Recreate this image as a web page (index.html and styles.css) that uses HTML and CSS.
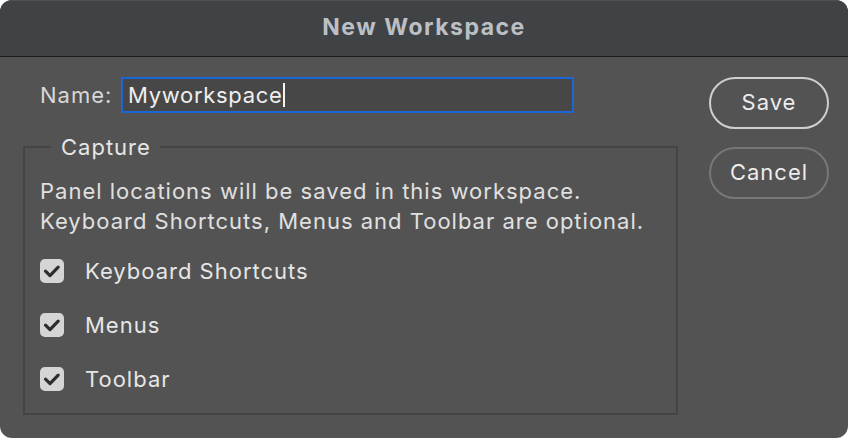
FILE: index.html
```html
<!DOCTYPE html>
<html lang="en">
<head>
<meta charset="utf-8">
<title>New Workspace</title>
<link rel="stylesheet" href="styles.css">
</head>
<body>
<div class="window">
  <header class="titlebar">New Workspace</header>
  <main class="content">
    <div class="main-col">
      <div class="name-row">
        <label class="name-label">Name:</label>
        <div class="name-field"><span class="name-value">Myworkspace</span><span class="caret"></span></div>
      </div>
      <fieldset class="capture">
        <legend class="capture-legend">Capture</legend>
        <p class="capture-desc">Panel locations will be saved in this workspace.<br>Keyboard Shortcuts, Menus and Toolbar are optional.</p>
        <ul class="options">
          <li class="option">
            <span class="checkbox"><svg viewBox="0 0 24 24" width="24" height="24"><path d="M5.5 12.2 L10 16.6 L18.2 8.2" fill="none" stroke="#2e2e2e" stroke-width="3.2" stroke-linecap="round" stroke-linejoin="round"/></svg></span>
            <span class="option-label">Keyboard Shortcuts</span>
          </li>
          <li class="option">
            <span class="checkbox"><svg viewBox="0 0 24 24" width="24" height="24"><path d="M5.5 12.2 L10 16.6 L18.2 8.2" fill="none" stroke="#2e2e2e" stroke-width="3.2" stroke-linecap="round" stroke-linejoin="round"/></svg></span>
            <span class="option-label">Menus</span>
          </li>
          <li class="option">
            <span class="checkbox"><svg viewBox="0 0 24 24" width="24" height="24"><path d="M5.5 12.2 L10 16.6 L18.2 8.2" fill="none" stroke="#2e2e2e" stroke-width="3.2" stroke-linecap="round" stroke-linejoin="round"/></svg></span>
            <span class="option-label">Toolbar</span>
          </li>
        </ul>
      </fieldset>
    </div>
    <div class="buttons">
      <button class="btn btn-primary">Save</button>
      <button class="btn btn-secondary">Cancel</button>
    </div>
  </main>
</div>
</body>
</html>
```
FILE: styles.css
```css
* { box-sizing: border-box; }
html, body {
  margin: 0;
  padding: 0;
  background: #ffffff;
}
body {
  font-family: Inter, "Noto Sans", "Liberation Sans", sans-serif;
  font-size: 22px;
  letter-spacing: 1px;
  color: #e2e2e2;
}
.window {
  width: 848px;
  height: 438px;
  background: #535353;
  border-radius: 12px;
  overflow: hidden;
  display: flex;
  flex-direction: column;
}
.titlebar {
  height: 57px;
  flex: none;
  background: #404346;
  border-bottom: 1px solid #1a1a1a;
  box-shadow: inset 0 1px 0 rgba(255,255,255,0.08);
  color: #bcc0c4;
  font-weight: 700;
  font-size: 23px;
  letter-spacing: 1.5px;
  line-height: 54px;
  text-align: center;
}
.content {
  display: flex;
  padding: 20px 19px 0 23px;
  gap: 31px;
}
.main-col {
  width: 655px;
  flex: none;
}
.name-row {
  display: flex;
  align-items: center;
  height: 36px;
}
.name-label {
  width: 98px;
  padding-left: 17px;
  color: #d8d8d8;
}
.name-field {
  width: 453px;
  height: 36px;
  border: 2px solid #1b66d9;
  background: #474747;
  padding-left: 5px;
  display: flex;
  align-items: center;
  color: #efefef;
}
.name-value {
  letter-spacing: 0.7px;
}
.caret {
  display: inline-block;
  width: 2px;
  height: 24px;
  background: #f4f4f4;
  margin-left: 0;
}
.capture {
  margin: 22px 0 0 0;
  padding: 17px 15px 19px 15px;
  border: 2px solid #444444;
  min-width: 0;
}
.capture-legend {
  padding: 0 9px 0 10px;
  margin-left: 11px;
  line-height: 24px;
  color: #e6e6e6;
}
.capture-desc {
  margin: 0;
  line-height: 30px;
  color: #e0e0e0;
}
.options {
  list-style: none;
  margin: 20px 0 0 0;
  padding: 0;
  display: flex;
  flex-direction: column;
  gap: 24px;
}
.option {
  display: flex;
  align-items: center;
  height: 30px;
  gap: 21px;
}
.checkbox {
  width: 24px;
  height: 24px;
  border-radius: 5px;
  background: #d5d5d5;
  display: flex;
  flex: none;
}
.option-label {
  color: #e6e6e6;
}
.buttons {
  display: flex;
  flex-direction: column;
  gap: 18px;
}
.btn {
  width: 120px;
  height: 52px;
  border-radius: 26px;
  background: transparent;
  font-family: inherit;
  font-size: 22px;
  letter-spacing: 1px;
  color: #ececec;
  padding: 0 0 3px 0;
  cursor: default;
}
.btn-primary {
  border: 2px solid #cfcfcf;
}
.btn-secondary {
  border: 2px solid #777777;
}
```
